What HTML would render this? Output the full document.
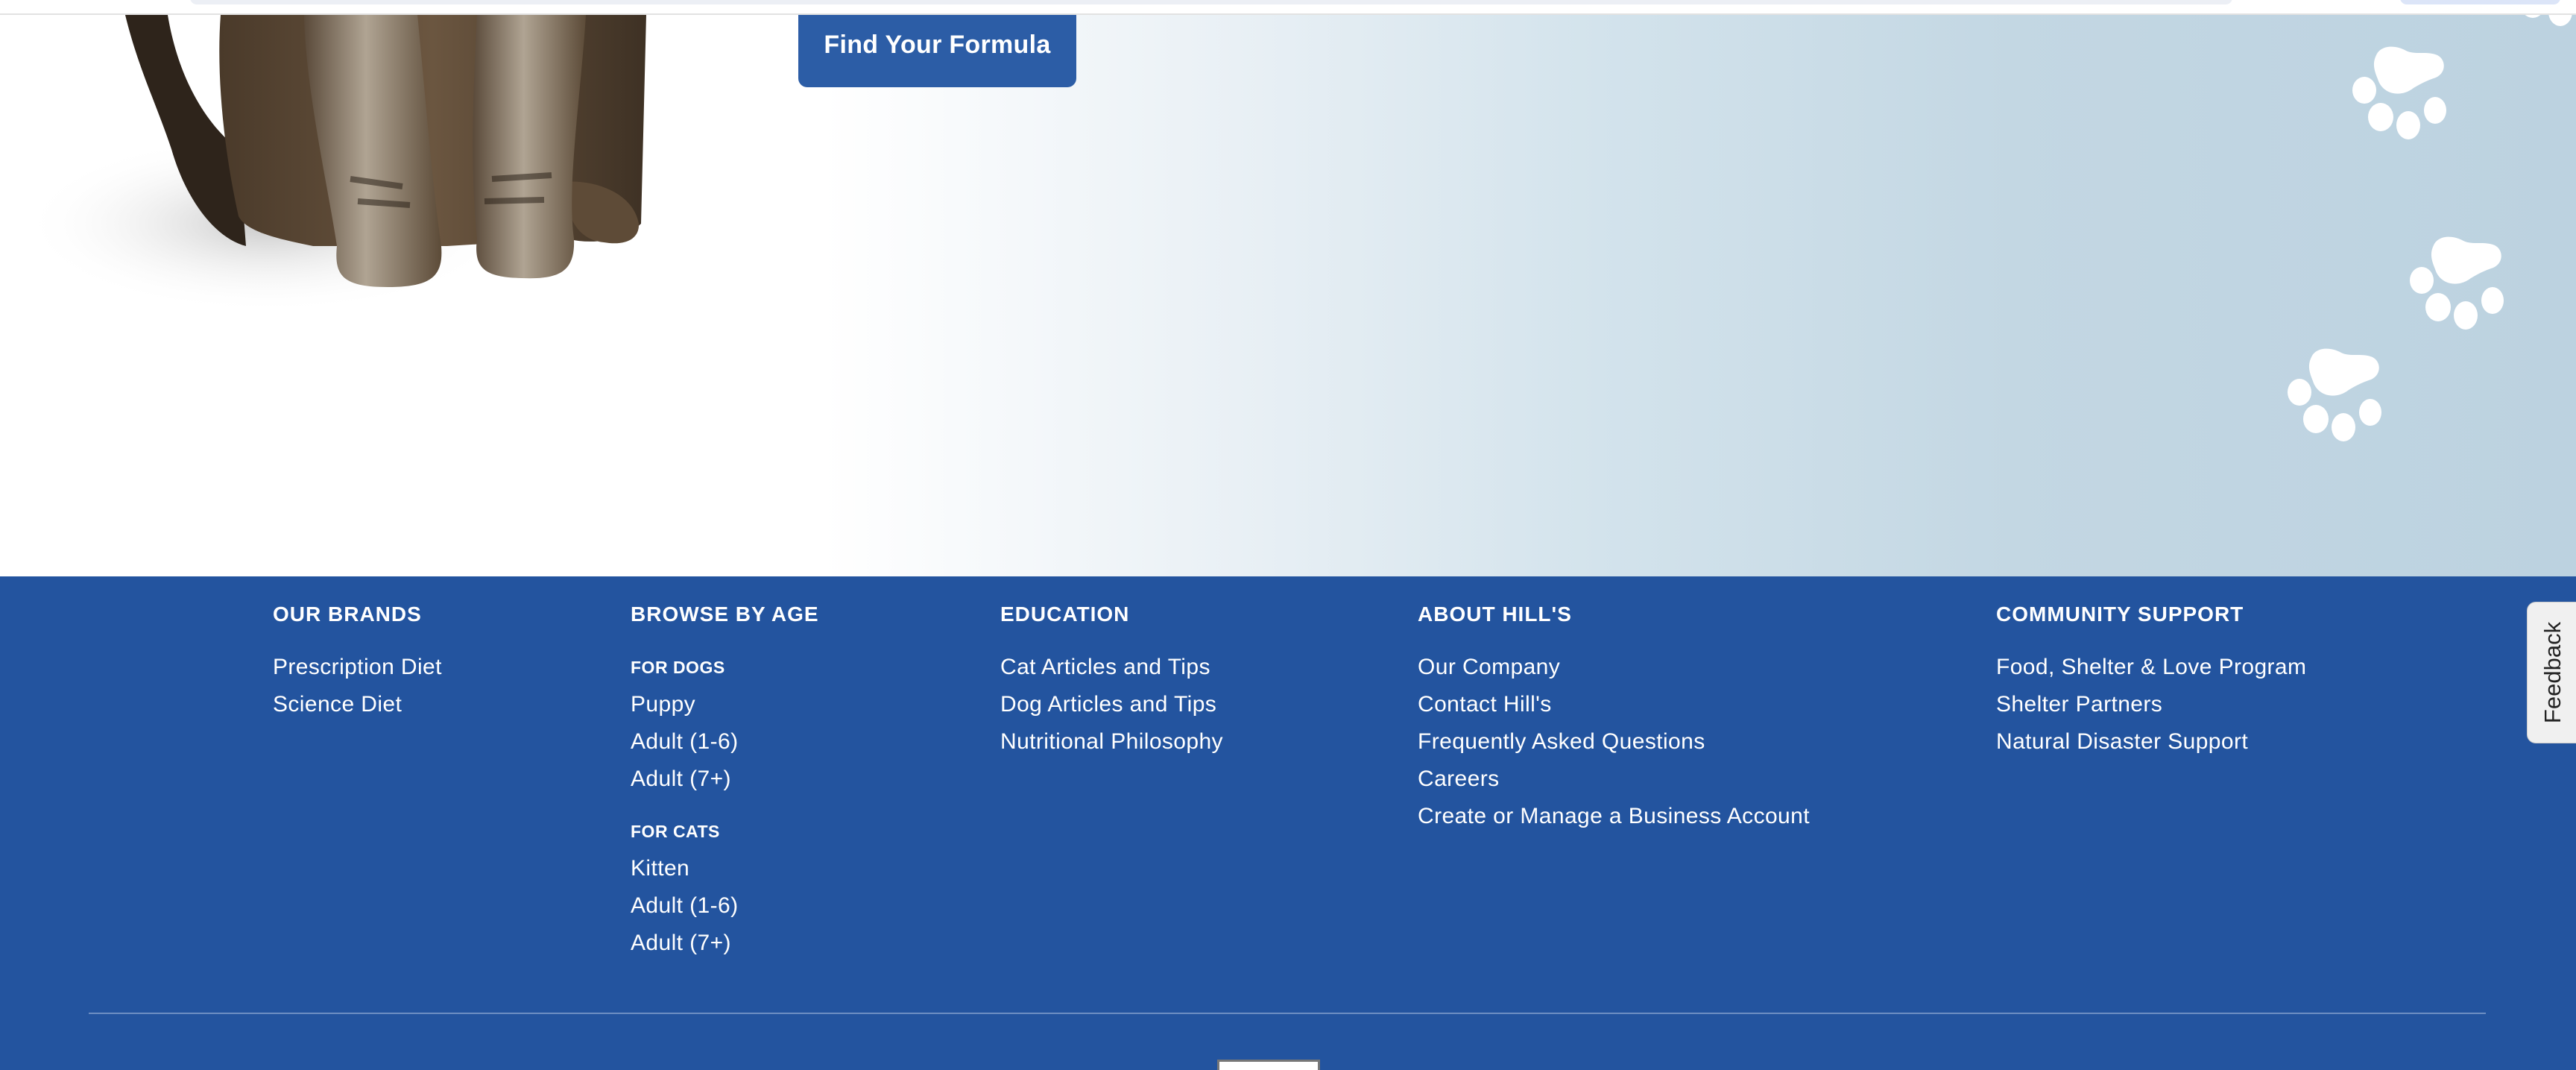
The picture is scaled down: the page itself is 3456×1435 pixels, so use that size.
<!DOCTYPE html>
<html><head><meta charset="utf-8">
<style>
*{margin:0;padding:0;box-sizing:border-box}
html,body{width:3456px;height:1435px;overflow:hidden}
body{font-family:"Liberation Sans",sans-serif;background:#fff;position:relative}
.hero{position:absolute;left:0;top:0;width:3456px;height:773px;background:linear-gradient(90deg,#fff 0%,#fff 32%,#e9f0f5 48%,#d3e3ec 62%,#c3d7e3 78%,#bcd2e0 100%)}
.top{position:absolute;left:0;top:0;width:3456px;height:20px;background:#fff;border-bottom:2px solid #e2e2e2;z-index:3;overflow:hidden}
.pill1{position:absolute;left:255px;top:-12px;width:2740px;height:18px;border-radius:10px;background:#eceff5}
.pill2{position:absolute;left:3220px;top:-12px;width:215px;height:18px;border-radius:10px;background:#dce5f8}
.btn{position:absolute;left:1071px;top:0;width:373px;height:117px;background:#2c5da6;border-radius:0 0 12px 12px;color:#fff;font-weight:bold;font-size:34px;text-align:center;line-height:120px;z-index:2;letter-spacing:.3px}
.foot{position:absolute;left:0;top:773px;width:3456px;height:662px;background:#23549f;color:#fff;overflow:hidden}
.h{position:absolute;font-weight:bold;font-size:28px;white-space:nowrap;letter-spacing:1px}
.l{position:absolute;font-size:30px;white-space:nowrap;letter-spacing:.4px}
.s{position:absolute;font-weight:bold;font-size:23px;white-space:nowrap;letter-spacing:.5px}
.line{position:absolute;left:119px;top:585px;width:3216px;height:2px;background:#6d8ec2}
.box{position:absolute;left:1633px;top:648px;width:138px;height:14px;background:#fff;border:3px solid #777;border-bottom:none}
.fb{position:absolute;left:3390px;top:807px;width:70px;height:190px;background:#f0f0f0;border-radius:12px 0 0 12px;border:1px solid #ccc;z-index:4}
.fb span{position:absolute;left:50%;top:50%;transform:translate(-50%,-50%) rotate(-90deg);font-size:31px;color:#222;white-space:nowrap}
</style></head><body>
<div class="hero">
<svg width="3456" height="773" style="position:absolute;left:0;top:0">
<defs>
<radialGradient id="sh" cx="0.5" cy="0.5" r="0.5"><stop offset="0" stop-color="#c8c8c8"/><stop offset="1" stop-color="#fff" stop-opacity="0"/></radialGradient>
<linearGradient id="fur" x1="0" x2="1"><stop offset="0" stop-color="#4a3a2a"/><stop offset=".5" stop-color="#6b5640"/><stop offset="1" stop-color="#3e3124"/></linearGradient>
<linearGradient id="leg" x1="0" x2="1"><stop offset="0" stop-color="#5a4a3a"/><stop offset=".45" stop-color="#b0a493"/><stop offset="1" stop-color="#5c4b38"/></linearGradient>
<g id="paw" fill="#fff">
<path d="M32 12 C38 -2 58 -2 72 6 C84 12 100 6 114 12 C126 18 126 36 112 42 C100 46 92 50 82 56 C64 70 40 64 34 44 C30 34 26 24 32 12 Z"/>
<ellipse cx="16" cy="59" rx="16" ry="18"/>
<ellipse cx="38" cy="95" rx="17" ry="19"/>
<ellipse cx="75" cy="106" rx="16" ry="19"/>
<ellipse cx="111" cy="86" rx="15" ry="18"/>
</g>
</defs>
<ellipse cx="360" cy="300" rx="330" ry="120" fill="url(#sh)"/>
<path d="M168 20 L225 20 C240 110 280 170 320 200 L330 330 C290 320 250 270 230 200 C210 140 185 90 168 20 Z" fill="#2e241b"/>
<path d="M296 20 L867 20 L860 300 C840 320 800 330 760 320 L600 330 L420 330 C370 320 330 310 320 290 C300 200 290 100 296 20 Z" fill="url(#fur)"/>
<path d="M755 244 C800 240 850 260 857 300 C858 320 840 330 810 325 C780 322 760 300 755 244 Z" fill="#5e4b37"/>
<path d="M408 20 L560 20 C570 120 580 250 592 330 C595 370 580 385 520 385 C460 385 448 370 452 330 C440 250 410 120 408 20 Z" fill="url(#leg)"/>
<path d="M640 20 L786 20 C780 120 760 250 770 320 C772 365 750 375 700 373 C650 372 635 360 640 320 C630 220 635 120 640 20 Z" fill="url(#leg)"/>
<g opacity=".55" stroke="#2a2018" stroke-width="8" fill="none">
<path d="M470 240 L540 250 M480 270 L550 275 M660 240 L740 235 M650 270 L730 268"/>
</g>
<use href="#paw" x="3156" y="62"/>
<use href="#paw" x="3233" y="317"/>
<use href="#paw" x="3069" y="467"/>
<use href="#paw" x="3360" y="-90"/>
</svg>
</div>
<div class="top"><div class="pill1"></div><div class="pill2"></div></div>
<div class="btn">Find Your Formula</div>
<div class="foot">
<div class="h" style="left:366px;top:35px">OUR BRANDS</div>
<div class="l" style="left:366px;top:105px">Prescription Diet</div>
<div class="l" style="left:366px;top:155px">Science Diet</div>

<div class="h" style="left:846px;top:35px">BROWSE BY AGE</div>
<div class="s" style="left:846px;top:109px">FOR DOGS</div>
<div class="l" style="left:846px;top:155px">Puppy</div>
<div class="l" style="left:846px;top:205px">Adult (1-6)</div>
<div class="l" style="left:846px;top:255px">Adult (7+)</div>
<div class="s" style="left:846px;top:329px">FOR CATS</div>
<div class="l" style="left:846px;top:375px">Kitten</div>
<div class="l" style="left:846px;top:425px">Adult (1-6)</div>
<div class="l" style="left:846px;top:475px">Adult (7+)</div>

<div class="h" style="left:1342px;top:35px">EDUCATION</div>
<div class="l" style="left:1342px;top:105px">Cat Articles and Tips</div>
<div class="l" style="left:1342px;top:155px">Dog Articles and Tips</div>
<div class="l" style="left:1342px;top:205px">Nutritional Philosophy</div>

<div class="h" style="left:1902px;top:35px">ABOUT HILL'S</div>
<div class="l" style="left:1902px;top:105px">Our Company</div>
<div class="l" style="left:1902px;top:155px">Contact Hill's</div>
<div class="l" style="left:1902px;top:205px">Frequently Asked Questions</div>
<div class="l" style="left:1902px;top:255px">Careers</div>
<div class="l" style="left:1902px;top:305px">Create or Manage a Business Account</div>

<div class="h" style="left:2678px;top:35px">COMMUNITY SUPPORT</div>
<div class="l" style="left:2678px;top:105px">Food, Shelter &amp; Love Program</div>
<div class="l" style="left:2678px;top:155px">Shelter Partners</div>
<div class="l" style="left:2678px;top:205px">Natural Disaster Support</div>

<div class="line"></div>
<div class="box"></div>
</div>
<div class="fb"><span>Feedback</span></div>
</body></html>
